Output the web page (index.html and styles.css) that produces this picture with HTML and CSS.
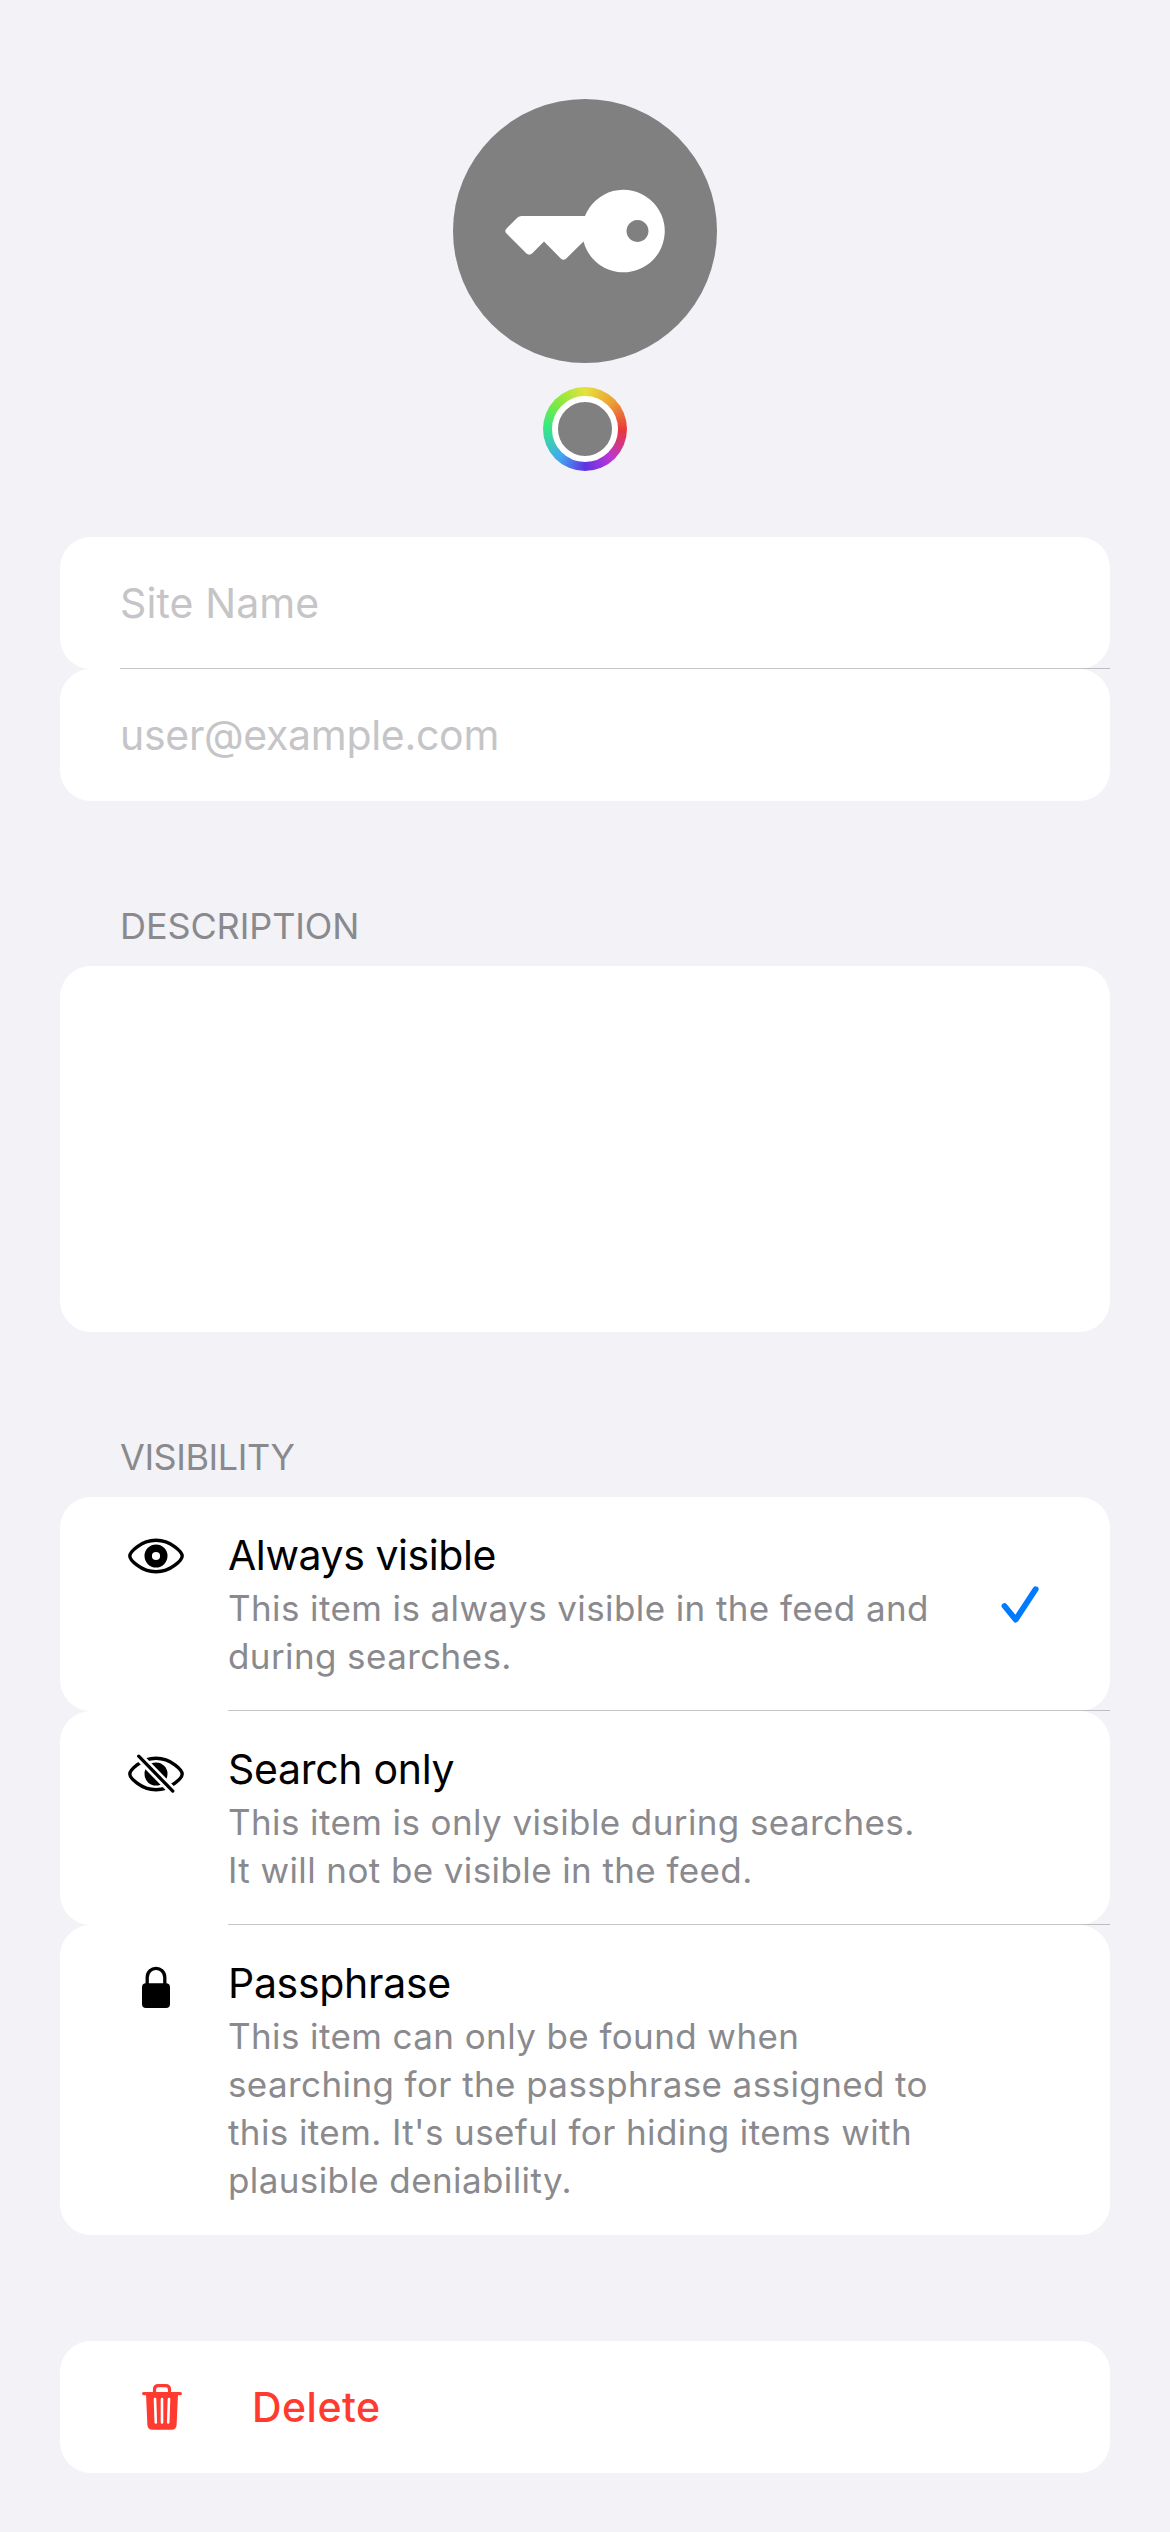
FILE: index.html
```html
<!DOCTYPE html>
<html lang="en">
<head>
<meta charset="utf-8">
<title>Edit Item</title>
<link rel="stylesheet" href="styles.css">
</head>
<body>
<main class="page">
  <header class="hero">
    <div class="avatar">
      <svg class="key" viewBox="0 0 160 84" width="160" height="84">
        <path fill="#fff" fill-rule="evenodd" d="M80 27 A41.3 41.3 0 1 1 78.500 52.500 L61 69.700 Q58.500 71.800 56 69.700 L39 52.600 L27 64.500 Q24 66.800 21.500 64.500 L1.300 44.300 Q-.8 42 1.300 39.700 L12.500 28.600 Q14.200 27 16.500 27 Z M132.500 31 a11 11 0 1 0 .01 0 Z"/>
      </svg>
    </div>
    <div class="color-well"><div class="color-swatch"></div></div>
  </header>

  <section class="group">
    <div class="row field">Site Name</div>
    <div class="row field field-email">user@example.com</div>
  </section>

  <h2 class="heading">DESCRIPTION</h2>
  <section class="row description"></section>

  <h2 class="heading heading-visibility">VISIBILITY</h2>
  <section class="group options">
    <div class="row option">
      <svg class="option-icon" viewBox="0 0 72 50" width="72" height="50">
        <path d="M9.800 26 C9.800 22.500 20.500 10.300 36 10.300 S62.200 22.500 62.200 26 S51.500 41.800 36 41.800 S9.800 29.500 9.800 26 Z" fill="none" stroke="#000" stroke-width="3.400"/>
        <circle cx="36" cy="26" r="7.800" fill="none" stroke="#000" stroke-width="7.400"/>
      </svg>
      <div class="option-text">
        <div class="option-title title-always">Always visible</div>
        <p class="option-note">This item is always visible in the feed and during searches.</p>
      </div>
      <svg class="check" viewBox="0 0 38 38" width="38" height="38">
        <path d="M3.500 20 L14.700 33.600 L34.700 3.200" fill="none" stroke="#007aff" stroke-width="5.800" stroke-linecap="round" stroke-linejoin="round"/>
      </svg>
    </div>
    <div class="row option">
      <svg class="option-icon" viewBox="0 0 72 50" width="72" height="50">
        <path d="M9.800 30 C9.800 26.500 20.500 14.300 36 14.300 S62.200 26.500 62.200 30 S51.500 45.800 36 45.800 S9.800 33.500 9.800 30 Z" fill="none" stroke="#000" stroke-width="3.400"/>
        <circle cx="36" cy="30" r="11.500"/>
        <path d="M15 8.500 L56 50.500" stroke="#fff" stroke-width="8.600"/>
        <path d="M18.700 12.200 L52.800 47.100" stroke="#000" stroke-width="3.300" stroke-linecap="round"/>
      </svg>
      <div class="option-text">
        <div class="option-title">Search only</div>
        <p class="option-note">This item is only visible during searches. It will not be visible in the feed.</p>
      </div>
    </div>
    <div class="row option">
      <svg class="option-icon" viewBox="0 0 72 50" width="72" height="50">
        <rect x="22" y="25.300" width="28" height="24.700" rx="4"/>
        <path d="M27.200 27 V19.500 C27.200 7.400 44.800 7.400 44.800 19.500 V27" fill="none" stroke="#000" stroke-width="3.300"/>
      </svg>
      <div class="option-text">
        <div class="option-title">Passphrase</div>
        <p class="option-note">This item can only be found when searching for the passphrase assigned to this item. It's useful for hiding items with plausible deniability.</p>
      </div>
    </div>
  </section>

  <button class="row delete">
    <svg class="trash" viewBox="0 0 40 46" width="40" height="46">
      <path d="M12.500 9 V5.500 Q12.500 1.600 16.300 1.600 H23.700 Q27.500 1.600 27.500 5.500 V9" fill="none" stroke="#ff3b30" stroke-width="3.200"/>
      <path d="M1.600 9.600 H38.400" stroke="#ff3b30" stroke-width="3.200" stroke-linecap="round"/>
      <path d="M4 10 H36 L34.600 41 Q34.300 45.800 29.600 45.800 H10.400 Q5.700 45.800 5.400 41 Z" fill="#ff3b30"/>
      <path d="M13 15 L13.800 38.500 M20 15 V38.500 M27 15 L26.200 38.500" stroke="#fff" stroke-width="2.600" stroke-linecap="round"/>
    </svg>
    <span>Delete</span>
  </button>
</main>
</body>
</html>
```
FILE: styles.css
```css
* {
  box-sizing: border-box;
}

body {
  margin: 0;
  background: #f2f2f7;
  font-family: Inter, "Liberation Sans", sans-serif;
  color: #000;
}

.page {
  width: 1170px;
  height: 2532px;
  padding: 99px 60px 0;
  display: flex;
  flex-direction: column;
  overflow: hidden;
}

.hero {
  display: flex;
  flex-direction: column;
  align-items: center;
  gap: 24px;
  margin-bottom: 66px;
}

.avatar {
  width: 264px;
  height: 264px;
  border-radius: 50%;
  background: #808080;
  display: flex;
  align-items: center;
  justify-content: center;
}

.color-well {
  width: 84px;
  height: 84px;
  padding: 9px;
  border-radius: 50%;
  background: conic-gradient(#e6e23c, #eca035 45deg, #e9373c 92deg, #b836d8 140deg, #5f35e2 180deg, #42aaf0 222deg, #35e884 272deg, #7ee93f 312deg, #e6e23c);
}

.color-swatch {
  width: 66px;
  height: 66px;
  border: 6px solid #fff;
  border-radius: 50%;
  background: #808080;
}

.row {
  background: #fff;
  border-radius: 31px;
}

/* Hairline between neighbouring rows, running to the card's right edge */
.group > .row:not(:last-child) {
  position: relative;
}

.group > .row:not(:last-child)::after {
  content: "";
  position: absolute;
  left: 60px;
  right: 0;
  bottom: 0;
  height: 1px;
  background: rgba(60, 60, 67, 0.29);
}

.options > .row:not(:last-child)::after {
  left: 168px;
}

.field {
  height: 132px;
  padding: 0 60px;
  display: flex;
  align-items: center;
  font-size: 41px;
  letter-spacing: 0.1px;
  color: #c5c5c7;
}

.field-email {
  letter-spacing: -0.3px;
}

.heading {
  margin: 101px 0 16px 60px;
  font-size: 36px;
  line-height: 48px;
  font-weight: 400;
  letter-spacing: -0.1px;
  color: #8a8a8e;
}

.heading-visibility {
  letter-spacing: -0.45px;
}

.description {
  height: 366px;
}

.option {
  padding: 33px 71px 31px 60px;
  display: flex;
}

.option-icon {
  flex: none;
  margin-right: 36px;
}

.option-text {
  width: 715px;
}

.option-title {
  font-size: 41px;
  line-height: 50px;
  letter-spacing: -0.3px;
}

.title-always {
  letter-spacing: -0.42px;
}

.option-note {
  margin: 4px 0 0;
  font-size: 35px;
  line-height: 48px;
  letter-spacing: 0.4px;
  color: #8a8a8e;
}

.check {
  flex: none;
  align-self: center;
  margin-left: auto;
}

.delete {
  height: 132px;
  margin-top: 106px;
  padding: 0 82px;
  border: 0;
  display: flex;
  align-items: center;
  gap: 70px;
  font: 500 41px Inter, "Liberation Sans", sans-serif;
  letter-spacing: 0.47px;
  color: #ff3b30;
}
```
